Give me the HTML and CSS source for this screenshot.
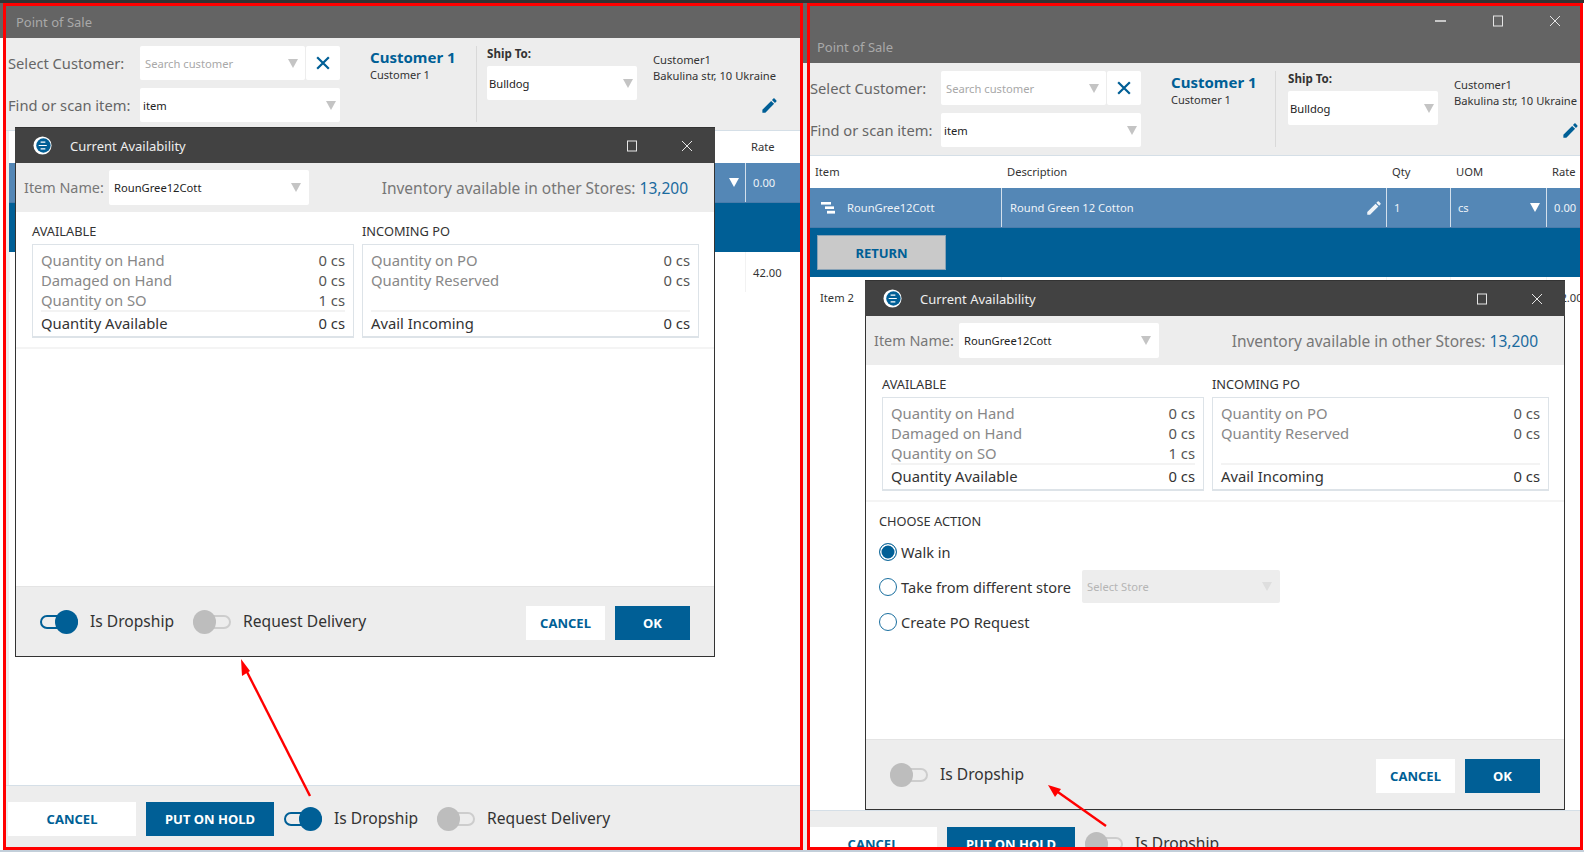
FILE: index.html
```html
<html>

<head>
  <link rel="stylesheet" href="styles.css">
</head>

<body>
  <svg class="sprite">
    <symbol id="pencil" viewBox="0 0 24 24">
      <path d="M3 17.25V21h3.75L17.81 9.94l-3.75-3.75L3 17.25zM20.71 7.04c.39-.39.39-1.02 0-1.41l-2.34-2.34c-.39-.39-1.02-.39-1.41 0l-1.83 1.83 3.75 3.75 1.83-1.83z"></path>
    </symbol>
    <symbol id="cross" viewBox="0 0 12 12">
      <path d="M1 1L11 11M11 1L1 11"></path>
    </symbol>
    <symbol id="square" viewBox="0 0 12 12">
      <rect x="1.5" y="1" width="9" height="10"></rect>
    </symbol>
    <symbol id="logo" viewBox="0 0 20 20">
      <circle cx="10" cy="10" r="9.5" fill="#fff"></circle>
      <circle cx="11" cy="10" r="7.6" fill="#005f96"></circle>
      <path d="M8 6.5h5M6 10h8.5M8 13.5h5" stroke="#fff" stroke-width="1.2"></path>
    </symbol>
  </svg>

  <div class="top-strip"></div>

  <div class="screen">
    <div class="gap gap-first"></div>

    <!-- first window: dialog with empty action area -->
    <div class="panel panel-first">
      <div class="title-bar">
        <div class="title-text">Point of Sale</div>
      </div>

      <div class="pos-header">
        <div class="lookup">
          <div class="lookup-label">Select Customer:</div>
          <div class="lookup-pair">
            <div class="field field-customer"><span class="placeholder">Search customer</span><i class="arrow"></i></div>
            <div class="clear-btn"><svg class="icon-clear"><use href="#cross"></use></svg></div>
          </div>
          <div class="lookup-label">Find or scan item:</div>
          <div class="field field-item">item<i class="arrow"></i></div>
        </div>
        <div class="customer">
          <div class="customer-name">Customer 1</div>
          <div class="customer-sub">Customer 1</div>
        </div>
        <div class="ship">
          <div class="ship-label">Ship To:</div>
          <div class="field field-ship">Bulldog<i class="arrow"></i></div>
        </div>
        <div class="address">
          <div>Customer1</div>
          <div>Bakulina str, 10 Ukraine</div>
          <svg class="icon-edit"><use href="#pencil"></use></svg>
        </div>
      </div>

      <div class="table">
        <div class="table-head">
          <div></div>
          <div></div>
          <div></div>
          <div></div>
          <div class="cell">Rate</div>
        </div>
        <div class="table-row row-active">
          <div></div>
          <div></div>
          <div></div>
          <div class="cell cell-uom"><i class="arrow arrow-light"></i></div>
          <div class="cell">0.00</div>
        </div>
        <div class="row-detail"></div>
        <div class="table-row row-plain">
          <div></div>
          <div></div>
          <div></div>
          <div></div>
          <div class="cell">42.00</div>
        </div>
      </div>

      <div class="pos-footer">
        <div class="btn btn-light btn-wide">CANCEL</div>
        <div class="btn btn-dark btn-wide">PUT ON HOLD</div>
        <span class="toggle toggle-on"><span class="toggle-thumb"></span></span>
        <span class="toggle-label">Is Dropship</span>
        <span class="toggle"><span class="toggle-thumb"></span></span>
        <span class="toggle-label">Request Delivery</span>
      </div>

      <div class="dialog dialog-first">
        <div class="dialog-title">
          <svg class="icon-logo"><use href="#logo"></use></svg>
          <div class="dialog-name">Current Availability</div>
          <svg class="icon-win icon-max"><use href="#square"></use></svg>
          <svg class="icon-win icon-close"><use href="#cross"></use></svg>
        </div>
        <div class="item-bar">
          <div class="item-label">Item Name:</div>
          <div class="field field-name">RounGree12Cott<i class="arrow"></i></div>
          <div class="stores">Inventory available in other Stores: <span class="stores-count">13,200</span></div>
        </div>
        <div class="stock">
          <div class="stock-col">
            <div class="stock-title">AVAILABLE</div>
            <div class="stock-box">
              <div class="stock-row"><span>Quantity on Hand</span><span>0 cs</span></div>
              <div class="stock-row"><span>Damaged on Hand</span><span>0 cs</span></div>
              <div class="stock-row"><span>Quantity on SO</span><span>1 cs</span></div>
              <div class="stock-row stock-total"><span>Quantity Available</span><span>0 cs</span></div>
            </div>
          </div>
          <div class="stock-col">
            <div class="stock-title">INCOMING PO</div>
            <div class="stock-box">
              <div class="stock-row"><span>Quantity on PO</span><span>0 cs</span></div>
              <div class="stock-row"><span>Quantity Reserved</span><span>0 cs</span></div>
              <div class="stock-row"></div>
              <div class="stock-row stock-total"><span>Avail Incoming</span><span>0 cs</span></div>
            </div>
          </div>
        </div>
        <div class="dialog-body"></div>
        <div class="dialog-footer">
          <span class="toggle toggle-on"><span class="toggle-thumb"></span></span>
          <span class="toggle-label">Is Dropship</span>
          <span class="toggle"><span class="toggle-thumb"></span></span>
          <span class="toggle-label">Request Delivery</span>
          <div class="btn btn-light btn-cancel">CANCEL</div>
          <div class="btn btn-dark btn-ok">OK</div>
        </div>
      </div>

      <svg class="note-arrow arrow-first" width="80" height="146" viewBox="0 0 80 146">
        <line x1="74" y1="142" x2="9" y2="14" stroke="#f00" stroke-width="2.4"></line>
        <polygon points="5,5 14,17 6,22" fill="#f00"></polygon>
      </svg>
    </div>

    <div class="gap gap-mid"></div>

    <!-- second window: dialog with actions -->
    <div class="panel panel-second">
      <div class="title-bar">
        <div class="win-controls">
          <div class="win-btn"><span class="win-min"></span></div>
          <div class="win-btn"><svg class="icon-win"><use href="#square"></use></svg></div>
          <div class="win-btn"><svg class="icon-win"><use href="#cross"></use></svg></div>
        </div>
        <div class="title-text">Point of Sale</div>
      </div>

      <div class="pos-header">
        <div class="lookup">
          <div class="lookup-label">Select Customer:</div>
          <div class="lookup-pair">
            <div class="field field-customer"><span class="placeholder">Search customer</span><i class="arrow"></i></div>
            <div class="clear-btn"><svg class="icon-clear"><use href="#cross"></use></svg></div>
          </div>
          <div class="lookup-label">Find or scan item:</div>
          <div class="field field-item">item<i class="arrow"></i></div>
        </div>
        <div class="customer">
          <div class="customer-name">Customer 1</div>
          <div class="customer-sub">Customer 1</div>
        </div>
        <div class="ship">
          <div class="ship-label">Ship To:</div>
          <div class="field field-ship">Bulldog<i class="arrow"></i></div>
        </div>
        <div class="address">
          <div>Customer1</div>
          <div>Bakulina str, 10 Ukraine</div>
          <svg class="icon-edit"><use href="#pencil"></use></svg>
        </div>
      </div>

      <div class="table">
        <div class="table-head">
          <div class="cell">Item</div>
          <div class="cell">Description</div>
          <div class="cell">Qty</div>
          <div class="cell">UOM</div>
          <div class="cell">Rate</div>
        </div>
        <div class="table-row row-active">
          <div class="cell cell-item">
            <svg class="icon-tree" width="16" height="12" viewBox="0 0 16 12">
              <rect x="1" y="0" width="10" height="2.6"></rect>
              <rect x="5" y="4.4" width="9" height="2.6"></rect>
              <rect x="7" y="8.8" width="8" height="2.8"></rect>
            </svg>
            RounGree12Cott
          </div>
          <div class="cell cell-desc">Round Green 12 Cotton<svg class="icon-edit-row"><use href="#pencil"></use></svg></div>
          <div class="cell">1</div>
          <div class="cell cell-uom">cs<i class="arrow arrow-light"></i></div>
          <div class="cell">0.00</div>
        </div>
        <div class="row-detail">
          <div class="btn btn-return">RETURN</div>
        </div>
        <div class="table-row row-plain">
          <div class="cell cell-item">Item 2</div>
          <div></div>
          <div></div>
          <div></div>
          <div class="cell">42.00</div>
        </div>
      </div>

      <div class="pos-footer">
        <div class="btn btn-light btn-wide">CANCEL</div>
        <div class="btn btn-dark btn-wide">PUT ON HOLD</div>
        <span class="toggle"><span class="toggle-thumb"></span></span>
        <span class="toggle-label">Is Dropship</span>
      </div>

      <div class="dialog dialog-second">
        <div class="dialog-title">
          <svg class="icon-logo"><use href="#logo"></use></svg>
          <div class="dialog-name">Current Availability</div>
          <svg class="icon-win icon-max"><use href="#square"></use></svg>
          <svg class="icon-win icon-close"><use href="#cross"></use></svg>
        </div>
        <div class="item-bar">
          <div class="item-label">Item Name:</div>
          <div class="field field-name">RounGree12Cott<i class="arrow"></i></div>
          <div class="stores">Inventory available in other Stores: <span class="stores-count">13,200</span></div>
        </div>
        <div class="stock">
          <div class="stock-col">
            <div class="stock-title">AVAILABLE</div>
            <div class="stock-box">
              <div class="stock-row"><span>Quantity on Hand</span><span>0 cs</span></div>
              <div class="stock-row"><span>Damaged on Hand</span><span>0 cs</span></div>
              <div class="stock-row"><span>Quantity on SO</span><span>1 cs</span></div>
              <div class="stock-row stock-total"><span>Quantity Available</span><span>0 cs</span></div>
            </div>
          </div>
          <div class="stock-col">
            <div class="stock-title">INCOMING PO</div>
            <div class="stock-box">
              <div class="stock-row"><span>Quantity on PO</span><span>0 cs</span></div>
              <div class="stock-row"><span>Quantity Reserved</span><span>0 cs</span></div>
              <div class="stock-row"></div>
              <div class="stock-row stock-total"><span>Avail Incoming</span><span>0 cs</span></div>
            </div>
          </div>
        </div>
        <div class="dialog-body">
          <div class="action-title">CHOOSE ACTION</div>
          <div class="action-row"><span class="radio radio-on"></span>Walk in</div>
          <div class="action-row"><span class="radio"></span>Take from different store
            <div class="field field-store"><span class="placeholder">Select Store</span><i class="arrow"></i></div>
          </div>
          <div class="action-row"><span class="radio"></span>Create PO Request</div>
        </div>
        <div class="dialog-footer">
          <span class="toggle"><span class="toggle-thumb"></span></span>
          <span class="toggle-label">Is Dropship</span>
          <div class="btn btn-light btn-cancel">CANCEL</div>
          <div class="btn btn-dark btn-ok">OK</div>
        </div>
      </div>

      <svg class="note-arrow arrow-second" width="64" height="46" viewBox="0 0 64 46">
        <line x1="61" y1="43" x2="10" y2="7" stroke="#f00" stroke-width="2.4"></line>
        <polygon points="3,2 16,6 10,14" fill="#f00"></polygon>
      </svg>
    </div>
  </div>

  <div class="bottom-strip"></div>
</body>

</html>
```

FILE: styles.css
```css
html,
body {
  margin: 0;
  height: 100%;
  overflow: hidden;
}

body {
  background: #fff;
  color: #333;
  font-family: "Noto Sans", "Open Sans", sans-serif;
  font-size: 11.2px;
}

.sprite {
  position: absolute;
  width: 0;
  height: 0;
}

.top-strip {
  height: 3px;
  background: #333;
}

.bottom-strip {
  height: 2px;
  background: #c3cfda;
}

.screen {
  display: flex;
  height: 847px;
}

.gap {
  flex: none;
}

.gap-first {
  width: 3px;
  background: linear-gradient(#646464 35px, #fff 35px);
}

.gap-mid {
  width: 4px;
  background: linear-gradient(#646464 60px, #ededed 60px);
}

.panel {
  position: relative;
  box-sizing: border-box;
  flex: none;
  display: flex;
  flex-direction: column;
  height: 847px;
  overflow: hidden;
  border: 3px solid #f00;
  background: #ededed;
}

.panel-first {
  width: 800px;
}

.panel-second {
  width: 776px;
}

/* window title */
.title-bar {
  flex: none;
  background: #646464;
}

.title-text {
  height: 32px;
  padding-left: 10px;
  line-height: 32px;
  font-size: 13px;
  color: #a9a9a9;
}

.panel-second .title-text {
  margin-top: -5px;
  padding-left: 7px;
}

.win-controls {
  display: flex;
  justify-content: flex-end;
  height: 30px;
  margin-right: -3px;
}

.win-btn {
  display: flex;
  justify-content: center;
  align-items: center;
  width: 57px;
}

.win-min {
  width: 11px;
  height: 2px;
  background: #c8c8c8;
}

.icon-win {
  width: 12px;
  height: 12px;
  fill: none;
  stroke: #e6e6e6;
  stroke-width: 1;
}

/* customer and ship-to header */
.pos-header {
  flex: none;
  display: flex;
  box-sizing: border-box;
  height: 93px;
  padding: 8px 0 0 2px;
  border-bottom: 1px solid #d5dfe7;
}

.panel-second .pos-header {
  padding-left: 0;
}

.lookup {
  display: grid;
  grid-template-columns: 132px 200px;
  grid-template-rows: 34px 34px;
  row-gap: 8px;
  align-items: center;
}

.panel-second .lookup {
  grid-template-columns: 131px 200px;
}

.lookup-label {
  font-size: 14.7px;
  color: #666;
  white-space: nowrap;
}

.lookup-pair {
  display: flex;
  gap: 1px;
}

.field {
  display: flex;
  align-items: center;
  justify-content: space-between;
  box-sizing: border-box;
  height: 34px;
  padding: 0 4px;
  border-radius: 2px;
  background: #fff;
  color: #222;
  font-size: 11.2px;
  white-space: nowrap;
}

.field-customer {
  width: 165px;
  padding: 0 7px 0 5px;
}

.field-item {
  width: 200px;
  padding-left: 3px;
}

.placeholder {
  color: #a8a8a8;
}

.arrow {
  flex: none;
  width: 0;
  height: 0;
  margin-left: auto;
  border-left: 5px solid transparent;
  border-right: 5px solid transparent;
  border-top: 9px solid #c4c4c4;
}

.arrow-light {
  border-top-color: #fff;
}

.clear-btn {
  display: flex;
  justify-content: center;
  align-items: center;
  width: 34px;
  height: 34px;
  border-radius: 2px;
  background: #fff;
}

.icon-clear {
  width: 14px;
  height: 14px;
  fill: none;
  stroke: #005f96;
  stroke-width: 1.9;
}

.customer {
  box-sizing: border-box;
  width: 107px;
  height: 76px;
  margin-left: 30px;
  padding-top: 1px;
  border-right: 1px solid #d9d9d9;
}

.customer-name {
  line-height: 20px;
  font-size: 15px;
  font-weight: 700;
  color: #005f96;
}

.customer-sub {
  padding-top: 1px;
  line-height: 14px;
  font-size: 11px;
  color: #333;
}

.ship {
  width: 150px;
  margin-left: 10px;
}

.panel-second .ship {
  margin-left: 12px;
}

.ship-label {
  height: 16px;
  margin-bottom: 4px;
  line-height: 16px;
  font-size: 11.6px;
  font-weight: 700;
  color: #333;
}

.field-ship {
  width: 150px;
  padding-left: 2px;
}

.address {
  position: relative;
  flex: none;
  margin-left: 16px;
  padding-top: 6px;
  line-height: 16px;
  font-size: 11.2px;
  white-space: nowrap;
}

.address svg {
  display: block;
  margin: 12px 0 0 107px;
}

.icon-edit {
  width: 19px;
  height: 19px;
  fill: #005f96;
}

/* table */
.table {
  flex: 1;
  min-height: 0;
  background: #fff;
}

.panel-first .table {
  margin-left: 3px;
}

.panel-second .table {
  flex: none;
  height: 654px;
}

.table-head,
.table-row {
  display: grid;
  grid-template-columns: 191px 385px 64px 96px 1fr;
  align-items: stretch;
}

.table-head {
  height: 32px;
  line-height: 32px;
  font-size: 11.2px;
}

.table-head .cell {
  padding-left: 6px;
}

.table-head .cell:first-child {
  padding-left: 5px;
}

.table-row {
  height: 40px;
  font-size: 11.2px;
}

.cell {
  overflow: hidden;
  white-space: nowrap;
}

.row-active {
  box-sizing: border-box;
  border-bottom: 1px solid #4a7cab;
  background: #5487b6;
  color: #eef3f8;
}

.row-active .cell {
  display: flex;
  align-items: center;
  padding-left: 7px;
  border-left: 1px solid #d3e0ec;
}

.row-active .cell-item {
  padding-left: 10px;
  border-left: none;
}

.icon-tree {
  flex: none;
  margin-right: 11px;
  fill: #fff;
}

.cell-desc,
.cell-uom {
  justify-content: space-between;
}

.row-active .cell-uom {
  padding-right: 6px;
}

.row-active .cell-desc {
  padding-left: 8px;
  padding-right: 3px;
}

.icon-edit-row {
  flex: none;
  width: 18px;
  height: 18px;
  fill: #eef3f8;
}

.row-detail {
  display: flex;
  align-items: flex-start;
  box-sizing: border-box;
  height: 49px;
  padding: 7px;
  background: #005f96;
}

.row-plain > div {
  padding-top: 12px;
  line-height: 18px;
  border-left: 1px solid #f2f2f2;
}

.row-plain > .cell {
  padding-left: 7px;
}

.row-plain > .cell-item {
  padding-left: 10px;
  border-left: none;
}

/* buttons */
.btn {
  flex: none;
  box-sizing: border-box;
  height: 34px;
  line-height: 34px;
  text-align: center;
  font-size: 13px;
  font-weight: 700;
}

.btn-light {
  background: #fff;
  color: #005f96;
}

.btn-dark {
  background: #005f96;
  color: #fff;
}

.btn-wide {
  width: 128px;
}

.btn-return {
  width: 129px;
  height: 35px;
  border: 1px solid #88a2b6;
  background: #c9c9c9;
  color: #005f96;
}

.btn-cancel {
  width: 79px;
  margin-left: auto;
}

.btn-ok {
  width: 75px;
  margin-left: 10px;
}

.dialog-footer .btn {
  margin-top: 3px;
}

/* bottom bar */
.pos-footer {
  flex: none;
  display: flex;
  align-items: flex-start;
  box-sizing: border-box;
  height: 62px;
  padding: 16px 0 0 2px;
  border-top: 1px solid #d5dfe7;
}

.panel-second .pos-footer {
  padding-left: 0;
}

.panel-second .pos-footer .btn-wide:first-child {
  margin-left: -1px;
}

.pos-footer .btn-dark {
  margin-left: 10px;
}

.pos-footer .toggle {
  margin-top: 5px;
  margin-left: 10px;
}

.pos-footer .toggle-label {
  margin-top: 4px;
  line-height: 24px;
}

.pos-footer .toggle-label + .toggle {
  margin-left: 19px;
}

/* switch */
.toggle {
  position: relative;
  flex: none;
  display: inline-block;
  width: 38px;
  height: 24px;
}

.toggle::before {
  content: "";
  position: absolute;
  top: 5px;
  left: 0;
  right: 0;
  height: 14px;
  box-sizing: border-box;
  border: 2px solid #cdcdcd;
  border-radius: 7px;
}

.toggle-thumb {
  position: absolute;
  top: 0;
  left: 0;
  width: 23px;
  height: 24px;
  border-radius: 50%;
  background: #bdbdbd;
}

.toggle-on::before {
  border-color: #005f96;
}

.toggle-on .toggle-thumb {
  left: 15px;
  background: #005f96;
}

.toggle-label {
  flex: none;
  margin-left: 12px;
  font-size: 15.6px;
  color: #333;
  white-space: nowrap;
}

/* dialog */
.dialog {
  position: absolute;
  box-sizing: border-box;
  display: flex;
  flex-direction: column;
  border: 1px solid #333;
  background: #fff;
}

.dialog-first {
  top: 121px;
  left: 9px;
  width: 700px;
  height: 530px;
}

.dialog-second {
  top: 274px;
  left: 55px;
  width: 700px;
  height: 530px;
}

.dialog-title {
  flex: none;
  display: flex;
  align-items: center;
  height: 35px;
  margin: -1px -1px 0;
  padding: 0 1px;
  border-top: 1px solid #333;
  background: #424242;
}

.icon-logo {
  flex: none;
  width: 19px;
  height: 19px;
  margin-left: 17px;
}

.dialog-name {
  flex: 1;
  margin-left: 18px;
  font-size: 13px;
  color: #eee;
}

.icon-max {
  flex: none;
  margin-right: 43px;
}

.icon-close {
  flex: none;
  margin-right: 21px;
}

.item-bar {
  flex: none;
  display: flex;
  align-items: center;
  height: 49px;
  padding: 0 26px 0 8px;
  background: #ededed;
}

.item-label {
  width: 85px;
  font-size: 14.4px;
  color: #777;
}

.field-name {
  width: 200px;
  height: 35px;
  padding: 0 8px 0 5px;
}

.stores {
  margin-left: auto;
  font-size: 15.5px;
  color: #777;
  white-space: nowrap;
}

.stores-count {
  color: #1a6a9e;
}

.stock {
  flex: none;
  display: grid;
  grid-template-columns: 322px 337px;
  column-gap: 8px;
  padding: 12px 0 9px 16px;
  border-bottom: 2px solid #f4f4f4;
}

.stock-title {
  height: 14px;
  margin-bottom: 6px;
  line-height: 14px;
  font-size: 12.8px;
}

.stock-box {
  box-sizing: border-box;
  height: 94px;
  padding: 5px 8px 0;
  border: 1px solid #dde3e8;
  border-bottom-width: 2px;
}

.stock-row {
  display: flex;
  justify-content: space-between;
  height: 20px;
  line-height: 20px;
  font-size: 14.8px;
  color: #888;
  white-space: nowrap;
}

.stock-row span:last-child {
  color: #555;
}

.stock-total {
  height: 24px;
  border-top: 2px solid #f3f3f3;
  line-height: 22px;
  color: #333;
}

.stock-total span:last-child {
  color: #333;
}

.dialog-body {
  flex: 1;
  padding-left: 13px;
}

.action-title {
  height: 14px;
  margin: 12px 0 6px;
  line-height: 14px;
  font-size: 12.8px;
}

.action-row {
  display: flex;
  align-items: center;
  height: 35px;
  font-size: 14.6px;
  color: #333;
  white-space: nowrap;
}

.radio {
  flex: none;
  box-sizing: border-box;
  width: 18px;
  height: 18px;
  margin-right: 4px;
  border: 1.5px solid #1a6f9f;
  border-radius: 50%;
}

.radio-on {
  background: #005f96;
  box-shadow: inset 0 0 0 1.5px #fff;
}

.field-store {
  width: 198px;
  height: 33px;
  margin-left: 11px;
  padding: 0 8px 0 5px;
  background: #ededed;
}

.field-store .placeholder {
  color: #b5b5b5;
}

.field-store .arrow {
  border-top-color: #dedede;
}

.dialog-footer {
  flex: none;
  display: flex;
  align-items: center;
  box-sizing: border-box;
  height: 70px;
  padding: 0 24px;
  border-top: 1px solid #e4e4e4;
  background: #ededed;
}

.dialog-footer .toggle-label {
  margin-bottom: 2px;
}

.dialog-footer .toggle-label + .toggle {
  margin-left: 19px;
}

.note-arrow {
  position: absolute;
}

.arrow-first {
  top: 648px;
  left: 230px;
}

.arrow-second {
  top: 777px;
  left: 235px;
}
```
